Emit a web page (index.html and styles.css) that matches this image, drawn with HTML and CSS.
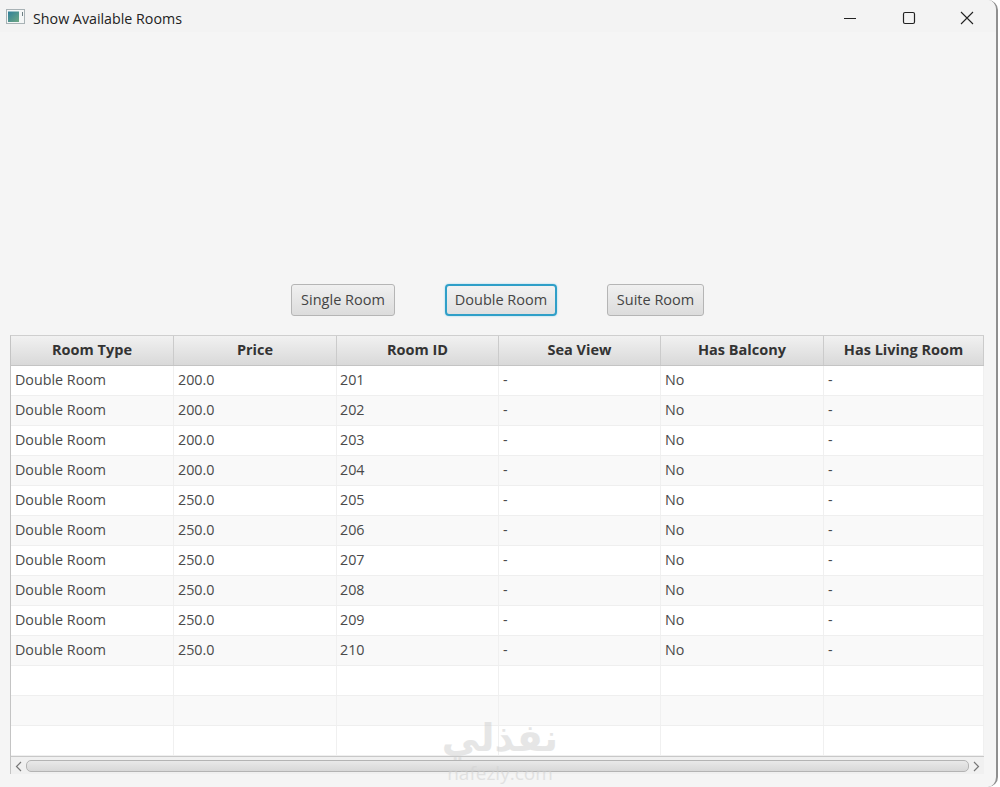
FILE: index.html
```html
<!DOCTYPE html>
<html lang="en">
<head>
<meta charset="utf-8">
<title>Show Available Rooms</title>
<link rel="stylesheet" href="styles.css">
</head>
<body>
<div class="window">
  <header class="titlebar">
    <svg class="app-icon" width="20" height="16" viewBox="0 0 20 16">
      <defs><linearGradient id="g" x1="0" y1="0" x2="1" y2="1"><stop offset="0" stop-color="#2f7f9a"/><stop offset="1" stop-color="#6fa883"/></linearGradient></defs>
      <rect x="0.5" y="0.5" width="18" height="14" fill="#f4f6f6" stroke="#a8b2b5"/>
      <rect x="2" y="2.5" width="11" height="10.5" fill="url(#g)"/>
      <rect x="16" y="3" width="1" height="4" fill="#6d7f83"/>
    </svg>
    <span class="title">Show Available Rooms</span>
    <div class="controls">
      <svg width="14" height="14" viewBox="0 0 14 14"><path d="M1 7.5H13" stroke="#222" stroke-width="1.1" fill="none"/></svg>
      <svg width="14" height="14" viewBox="0 0 14 14"><rect x="1.5" y="1.5" width="11" height="11" rx="1.5" stroke="#222" stroke-width="1.2" fill="none"/></svg>
      <svg width="14" height="14" viewBox="0 0 14 14"><path d="M1 1L13 13M13 1L1 13" stroke="#222" stroke-width="1.1" fill="none"/></svg>
    </div>
  </header>
  <div class="buttons">
    <button class="btn btn-single">Single Room</button>
    <button class="btn btn-double">Double Room</button>
    <button class="btn btn-suite">Suite Room</button>
  </div>
  <div class="table">
    <div class="row head"><div>Room Type</div><div>Price</div><div>Room ID</div><div>Sea View</div><div>Has Balcony</div><div>Has Living Room</div></div>
    <div class="row"><div>Double Room</div><div>200.0</div><div>201</div><div>-</div><div>No</div><div>-</div></div>
    <div class="row"><div>Double Room</div><div>200.0</div><div>202</div><div>-</div><div>No</div><div>-</div></div>
    <div class="row"><div>Double Room</div><div>200.0</div><div>203</div><div>-</div><div>No</div><div>-</div></div>
    <div class="row"><div>Double Room</div><div>200.0</div><div>204</div><div>-</div><div>No</div><div>-</div></div>
    <div class="row"><div>Double Room</div><div>250.0</div><div>205</div><div>-</div><div>No</div><div>-</div></div>
    <div class="row"><div>Double Room</div><div>250.0</div><div>206</div><div>-</div><div>No</div><div>-</div></div>
    <div class="row"><div>Double Room</div><div>250.0</div><div>207</div><div>-</div><div>No</div><div>-</div></div>
    <div class="row"><div>Double Room</div><div>250.0</div><div>208</div><div>-</div><div>No</div><div>-</div></div>
    <div class="row"><div>Double Room</div><div>250.0</div><div>209</div><div>-</div><div>No</div><div>-</div></div>
    <div class="row"><div>Double Room</div><div>250.0</div><div>210</div><div>-</div><div>No</div><div>-</div></div>
    <div class="row"><div></div><div></div><div></div><div></div><div></div><div></div></div>
    <div class="row"><div></div><div></div><div></div><div></div><div></div><div></div></div>
    <div class="row"><div></div><div></div><div></div><div></div><div></div><div></div></div>
    <div class="scrollbar">
      <svg width="14" height="16" viewBox="0 0 14 16"><path d="M9 4L4.5 8.5L9 13" stroke="#777" stroke-width="1.2" fill="none"/></svg>
      <div class="thumb"></div>
      <svg width="14" height="16" viewBox="0 0 14 16"><path d="M5 4L9.5 8.5L5 13" stroke="#777" stroke-width="1.2" fill="none"/></svg>
    </div>
  </div>
  <div class="watermark"><span class="wm-ar" lang="ar" dir="rtl">نفذلي</span><span class="wm-en">nafezly.com</span></div>
</div>
</body>
</html>
```
FILE: styles.css
```css
* { box-sizing: border-box; }
html, body { margin: 0; background: #fff; }
body { font-family: "Open Sans", "Noto Sans", sans-serif; color: #3a3a3a; }
.window {
  position: relative;
  width: 998px;
  height: 787px;
  background: #f5f5f5;
  border-right: 2px solid #8f8f8f;
  border-radius: 0 10px 10px 0;
  overflow: hidden;
  display: flex;
  flex-direction: column;
}
.titlebar {
  height: 32px;
  flex: none;
  display: flex;
  align-items: center;
  padding: 4px 0 0 6px;
  background: #f3f3f3;
}
.app-icon { margin: -2px 7px 0 0; flex: none; }
.title { font-size: 14.25px; color: #222; }
.controls {
  margin-left: auto;
  width: 131px;
  margin-right: 22px;
  display: flex;
  justify-content: space-between;
  align-items: center;
  height: 100%;
}
.buttons {
  margin-top: 252px;
  height: 32px;
  flex: none;
  display: flex;
  padding-left: 291px;
}
.btn {
  height: 32px;
  padding: 0 0 2px;
  font: 14.5px "Open Sans", "Noto Sans", sans-serif;
  color: #444;
  border: 1px solid #b5b5b5;
  border-radius: 3px;
  background: linear-gradient(#f0f0f0, #dcdcdc);
}
.btn-single { width: 104px; }
.btn-double {
  width: 112px;
  margin-left: 50px;
  border: 2px solid #2f9fc8;
  box-shadow: 0 0 2px #8fd3ef;
  border-radius: 4px;
  background: linear-gradient(#f2f2f2, #e0e0e0);
}
.btn-suite { width: 97px; margin-left: 50px; }
.table {
  margin: 19px 0 0 10px;
  width: 974px;
  height: 439px;
  flex: none;
  border: 1px solid #c4c4c4;
  border-top-color: #cfcfcf;
  border-right: 0;
  background: #fff;
  display: flex;
  flex-direction: column;
}
.row {
  display: grid;
  grid-template-columns: 163px 163px 162px 162px 163px 160px;
  height: 30px;
  flex: none;
  font-size: 14.3px;
  line-height: 28px;
  border-bottom: 1px solid #efefef;
  background: #fff;
  color: #4a4a4a;
}
.row:nth-child(odd):not(.head) { background: #f9f9f9; }
.row > div {
  padding-left: 4px;
  border-right: 1px solid #f0f0f0;
  white-space: nowrap;
  overflow: hidden;
}
.row > div:nth-child(3) { padding-left: 3px; }
.row.head {
  height: 30px;
  background: linear-gradient(#f1f1f1, #d9d9d9);
  border-bottom: 1px solid #c4c4c4;
  font-weight: 700;
  font-size: 14.5px;
  color: #333;
}
.row.head > div {
  padding-left: 0;
  text-align: center;
  border-right: 1px solid #cbcbcb;
}
.scrollbar {
  height: 18px;
  flex: none;
  display: flex;
  align-items: center;
  padding: 0 1px;
  background: #f0f0f0;
  border-top: 1px solid #c8c8c8;
}
.thumb {
  flex: 1;
  height: 12px;
  border: 1px solid #b4b4b4;
  border-radius: 5px;
  background: linear-gradient(#e9e9e9, #d8d8d8);
}
.watermark {
  position: absolute;
  left: 430px;
  top: 716px;
  width: 140px;
  height: 71px;
  display: flex;
  flex-direction: column;
  align-items: center;
  color: #d2d2d2;
  opacity: 0.55;
  pointer-events: none;
}
.wm-ar { font: 700 38px/44px "DejaVu Sans", sans-serif; }
.wm-en { font: 400 19px/20px "Open Sans", sans-serif; margin-top: 3px; }
```
